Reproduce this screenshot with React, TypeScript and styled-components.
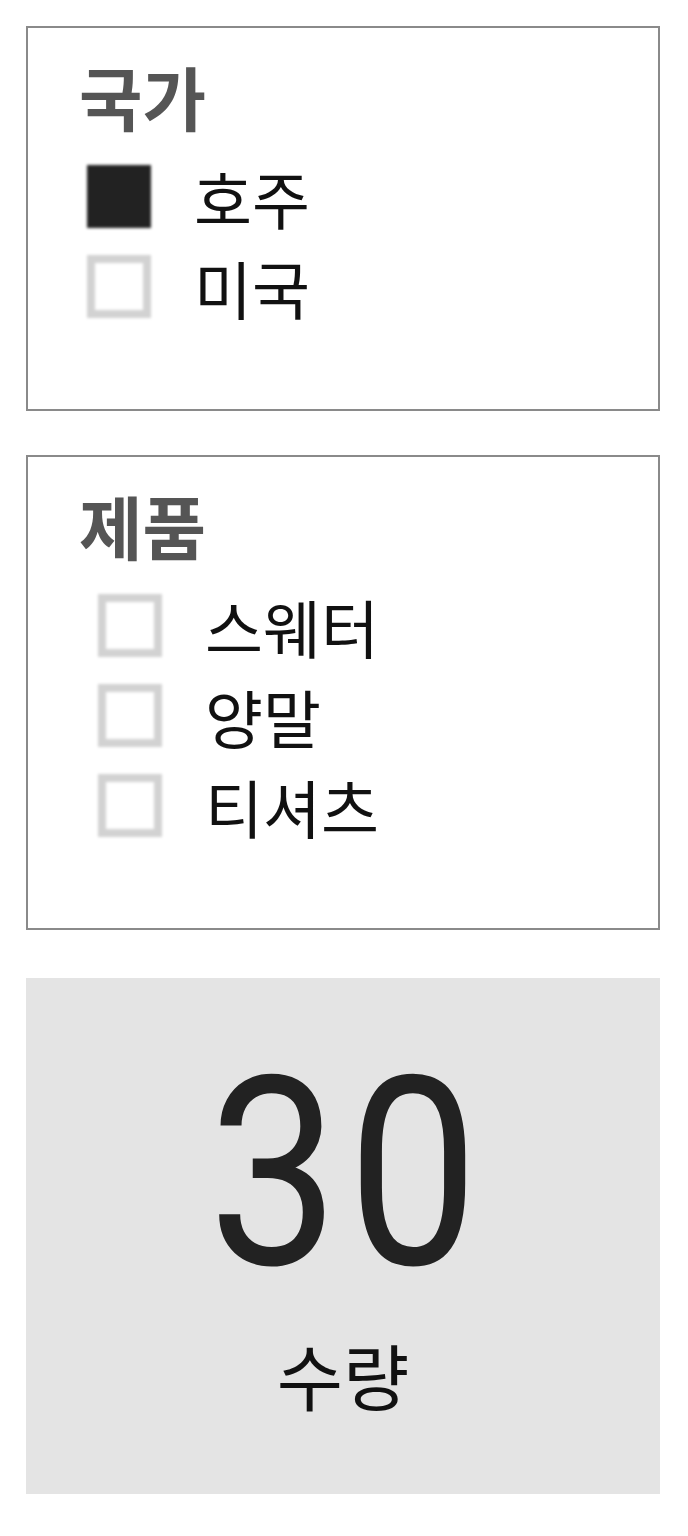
import React from 'react';
import styled, { createGlobalStyle } from 'styled-components';

const GlobalStyle = createGlobalStyle`
  html, body {
    margin: 0;
    padding: 0;
    background: #fff;
  }
  body {
    font-family: "Noto Sans CJK KR", "Noto Sans", sans-serif;
    color: #111;
  }
`;

const Page = styled.div`
  display: flex;
  flex-direction: column;
  gap: 44px;
  padding: 26px 28px 40px 26px;
`;

const Panel = styled.section`
  border: 2px solid #8a8a8a;
  padding: 28px 0 78px 51px;
`;

const PanelTitle = styled.h2`
  margin: 0 0 15px;
  font-size: 69px;
  line-height: 80px;
  font-weight: 700;
  color: #555;
`;

const OptionList = styled.ul<{ $indent?: number }>`
  list-style: none;
  margin: 0;
  padding: 0 0 0 ${p => p.$indent ?? 8}px;
`;

const OptionRow = styled.li`
  display: flex;
  align-items: center;
  gap: 43px;
  height: 90px;
`;

const CheckBox = styled.span<{ $checked?: boolean }>`
  box-sizing: border-box;
  width: 64px;
  height: 63px;
  flex: none;
  background: ${p => (p.$checked ? '#222' : '#fff')};
  border: 8px solid ${p => (p.$checked ? '#222' : '#d2d2d2')};
  filter: blur(1.4px);
`;

const OptionLabel = styled.span`
  font-size: 63px;
  line-height: 1;
  color: #111;
`;

const StatCard = styled.section`
  display: flex;
  flex-direction: column;
  align-items: center;
  margin-top: 4px;
  background: #e4e4e4;
  padding: 64px 0 84px;
`;

const StatValue = styled.div`
  font-family: Roboto, "Noto Sans", sans-serif;
  font-size: 264px;
  line-height: 1;
  letter-spacing: 10px;
  padding-left: 10px;
  color: #222;
  transform: scaleX(0.88);
  filter: blur(0.7px);
`;

const StatLabel = styled.div`
  margin-top: 32px;
  font-size: 72px;
  line-height: 1;
  color: #111;
`;

type Option = { label: string; checked?: boolean };

const countries: Option[] = [
  { label: '호주', checked: true },
  { label: '미국' },
];

const products: Option[] = [
  { label: '스웨터' },
  { label: '양말' },
  { label: '티셔츠' },
];

const FilterPanel = ({ title, options, indent }: { title: string; options: Option[]; indent?: number }) => (
  <Panel>
    <PanelTitle>{title}</PanelTitle>
    <OptionList $indent={indent}>
      {options.map(o => (
        <OptionRow key={o.label}>
          <CheckBox $checked={o.checked} />
          <OptionLabel>{o.label}</OptionLabel>
        </OptionRow>
      ))}
    </OptionList>
  </Panel>
);

export default function App() {
  return (
    <>
      <GlobalStyle />
      <Page>
        <FilterPanel title="국가" options={countries} />
        <FilterPanel title="제품" options={products} indent={19} />
        <StatCard>
          <StatValue>30</StatValue>
          <StatLabel>수량</StatLabel>
        </StatCard>
      </Page>
    </>
  );
}
